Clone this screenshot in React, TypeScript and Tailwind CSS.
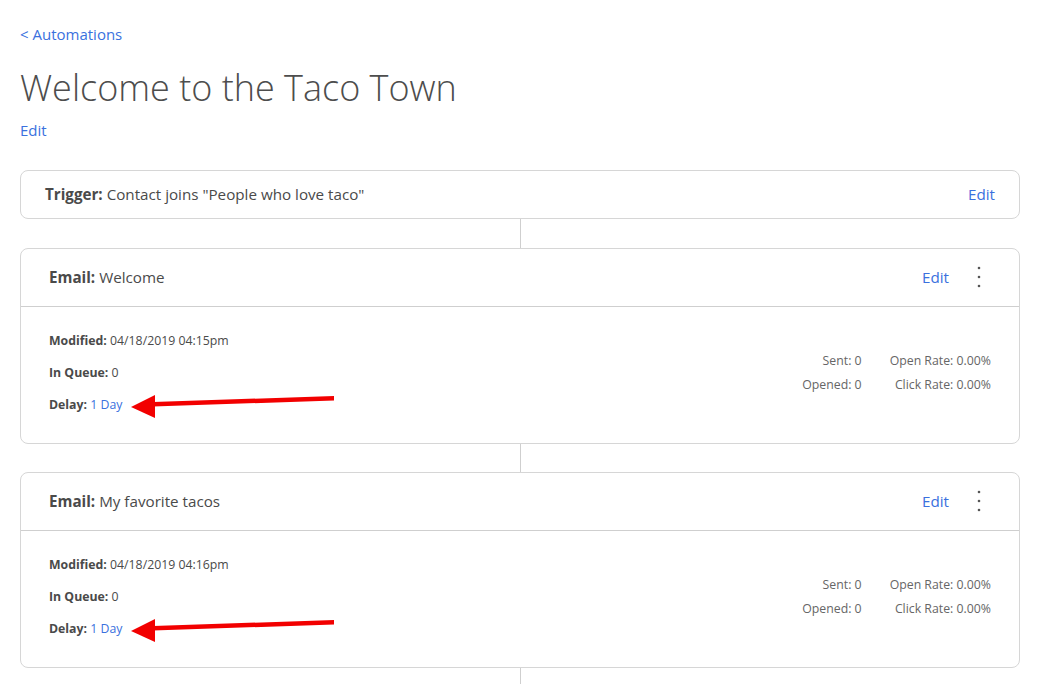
import React from 'react'

const BLUE = 'text-[#3a71de]'

function Kebab() {
  return (
    <svg width="4" height="22" viewBox="0 0 4 22" className="text-[#555]">
      <circle cx="2" cy="2" r="1.3" fill="currentColor" />
      <circle cx="2" cy="11" r="1.3" fill="currentColor" />
      <circle cx="2" cy="20" r="1.3" fill="currentColor" />
    </svg>
  )
}

function RedArrow() {
  // annotation drawn over the card body
  return (
    <svg
      className="absolute left-[108px] top-[143px] pointer-events-none"
      width="210"
      height="28"
      viewBox="0 0 210 28"
    >
      <polygon points="205,4 205,8.5 24,14.5 24,10" fill="#f20000" />
      <polygon points="2,15 26,3 26,26" fill="#f20000" />
    </svg>
  )
}

function Connector({ short }: { short?: boolean }) {
  return <div className={`mx-auto w-px bg-[#cfcfcf] ${short ? 'h-[28px]' : 'h-[29px]'}`} />
}

function EmailCard({ name, modified }: { name: string; modified: string }) {
  return (
    <div className="relative border border-[#d6d6d6] rounded-[8px] bg-white">
      <div className="h-[58px] flex items-center justify-between pl-[28px] pr-[38px] border-b border-[#cfcfcf] text-[15.2px] text-[#4a4a4a]">
        <div>
          <span className="font-bold">Email:</span> {name}
        </div>
        <div className="flex items-center gap-[28px]">
          <span className={BLUE}>Edit</span>
          <Kebab />
        </div>
      </div>
      <div className="flex items-center justify-between pl-[28px] pr-[28px] pt-[18px] pb-[22px] text-[12.3px] text-[#4a4a4a]">
        <div className="leading-[32px]">
          <div>
            <span className="font-bold">Modified:</span> {modified}
          </div>
          <div>
            <span className="font-bold">In Queue:</span> 0
          </div>
          <div>
            <span className="font-bold">Delay:</span> <span className={BLUE}>1 Day</span>
          </div>
        </div>
        <div className="grid grid-cols-[auto_auto] gap-x-[28px] leading-[24px] text-right text-[#666]">
          <span>Sent: 0</span>
          <span>Open Rate: 0.00%</span>
          <span>Opened: 0</span>
          <span>Click Rate: 0.00%</span>
        </div>
      </div>
      <RedArrow />
    </div>
  )
}

export default function App() {
  return (
    <div className="bg-white px-[20px] pt-[24px] font-['Open_Sans',sans-serif] text-[#4a4a4a] overflow-hidden h-[684px]">
      <div className={`text-[15px] leading-[20px] ${BLUE}`}>&lt; Automations</div>
      <h1 className="mt-[20px] text-[36px] leading-[48px] font-light text-[#4d4d4d]">
        Welcome to the Taco Town
      </h1>
      <div className={`mt-[8px] text-[15px] leading-[20px] ${BLUE}`}>Edit</div>

      <div className="mt-[30px] w-[1000px]">
        <div className="h-[49px] border border-[#d6d6d6] rounded-[8px] flex items-center justify-between pl-[24px] pr-[24px] text-[15.2px]">
          <div>
            <span className="font-bold">Trigger:</span> Contact joins "People who love taco"
          </div>
          <span className={BLUE}>Edit</span>
        </div>
        <Connector />
        <EmailCard name="Welcome" modified="04/18/2019 04:15pm" />
        <Connector short />
        <EmailCard name="My favorite tacos" modified="04/18/2019 04:16pm" />
        <Connector />
      </div>
    </div>
  )
}
